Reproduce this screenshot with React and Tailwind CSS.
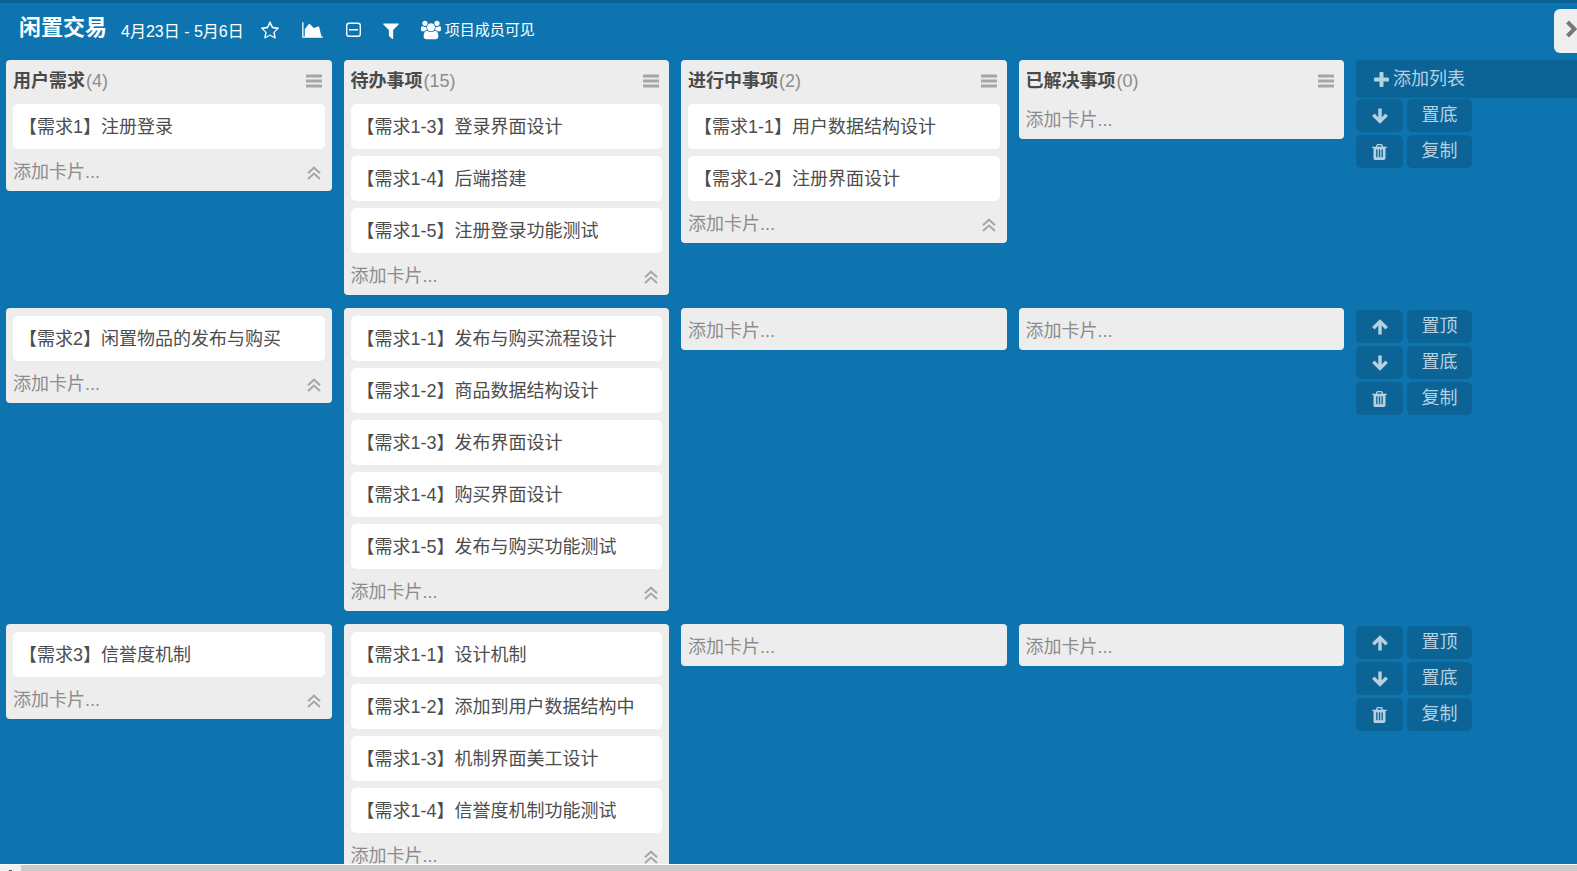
const LATIN_CJK = "font-['Liberation_Sans','Noto_Sans_CJK_SC',sans-serif]";

function Svg({ box, className, children }) {
  return (
    <svg viewBox={box} className={className} fill="currentColor" aria-hidden="true">
      {children}
    </svg>
  );
}

const StarIcon = () => (
  <Svg box="0 0 1664 1600" className="h-[18px] w-[18px]">
    <path d="M1137 1004l306-297-422-62-189-382-189 382-422 62 306 297-73 421 378-199 377 199zM1664 615q0 22-26 48l-363 354 86 500q1 7 1 20 0 50-41 50-19 0-40-12l-449-236-449 236q-22 12-40 12-21 0-31.500-14.500t-10.500-35.500q0-6 2-20l86-500-364-354q-25-27-25-48 0-37 56-46l502-73 225-455q19-41 49-41t49 41l225 455 502 73q56 9 56 46z" />
  </Svg>
);
const AreaChartIcon = () => (
  <Svg box="0 0 2048 1792" className="h-[18px] w-[21px]">
    <path d="M2048 1536v128h-2048v-1536h128v1408h1920zM1664 512l256 1024h-1664v-704l448-576 448 448z" />
  </Svg>
);
const CollapseIcon = () => (
  <Svg box="0 0 15 16" className="h-4 w-[15px]">
    <path fillRule="evenodd" d="M3 .500h9a3 3 0 0 1 3 3v8.500a3 3 0 0 1-3 3H3a3 3 0 0 1-3-3V3.500a3 3 0 0 1 3-3zm0 1.400A1.600 1.600 0 0 0 1.400 3.500v8.500A1.600 1.600 0 0 0 3 13.600h9a1.600 1.600 0 0 0 1.600-1.600V3.500A1.600 1.600 0 0 0 12 1.900zM3 7h9v1.500H3z" />
  </Svg>
);
const FilterIcon = () => (
  <Svg box="0 0 1408 1536" className="h-[17px] w-4">
    <path d="M1403 167q17 41-14 70l-493 493v742q0 42-39 59-13 5-25 5-27 0-45-19l-256-256q-19-19-19-45v-486l-493-493q-31-29-14-70 17-39 59-39h1280q42 0 59 39z" />
  </Svg>
);
const UsersIcon = () => (
  <Svg box="0 0 1920 1792" className="h-5 w-5">
    <path d="M593 896q-162 5-265 128h-134q-82 0-138-40.500t-56-118.500q0-353 124-353 6 0 43.500 21t97.500 42.500 119 21.500q67 0 133-23-5 37-5 66 0 139 81 256zM1664 1533q0 120-73 189.500t-194 69.500h-874q-121 0-194-69.500t-73-189.500q0-53 3.500-103.500t14-109 26.500-108.500 43-97.500 62-81 85.500-53.500 111.500-20q10 0 43 21.500t73 48 107 48 135 21.500 135-21.500 107-48 73-48 43-21.500q61 0 111.500 20t85.500 53.500 62 81 43 97.500 26.500 108.500 14 109 3.500 103.500zM640 256q0 106-75 181t-181 75-181-75-75-181 75-181 181-75 181 75 75 181zM1344 640q0 159-112.500 271.500t-271.500 112.500-271.500-112.500-112.500-271.500 112.500-271.500 271.500-112.500 271.500 112.500 112.500 271.500zM1920 865q0 78-56 118.500t-138 40.500h-134q-103-123-265-128 81-117 81-256 0-29-5-66 66 23 133 23 59 0 119-21.500t97.500-42.500 43.500-21q124 0 124 353zM1792 256q0 106-75 181t-181 75-181-75-75-181 75-181 181-75 181 75 75 181z" />
  </Svg>
);
const MenuIcon = () => (
  <Svg box="0 0 16 14" className="h-[14px] w-4">
    <path d="M0 .5h16v3H0zM0 5.500h16v3H0zM0 10.500h16v3H0z" />
  </Svg>
);
const DoubleUpIcon = () => (
  <svg viewBox="0 0 14 14" className="h-[14px] w-[14px]" fill="none" stroke="currentColor" strokeWidth="2" aria-hidden="true">
    <path d="M1 7.200l6-5.500 6 5.500M1 13l6-5.500 6 5.500" />
  </svg>
);
const PlusIcon = () => (
  <Svg box="0 0 15 15" className="h-[15px] w-[15px]">
    <rect x="0" y="5.500" width="15" height="4" rx="1" />
    <rect x="5.500" y="0" width="4" height="15" rx="1" />
  </Svg>
);
const ArrowIcon = ({ up }) => (
  <svg viewBox="0 0 16 16" className={up ? "h-4 w-4" : "h-4 w-4 rotate-180"} fill="none" stroke="currentColor" strokeWidth="3.400" aria-hidden="true">
    <path d="M8 15.500V3M1.300 9.300L8 2.600l6.700 6.700" />
  </svg>
);
const TrashIcon = () => (
  <Svg box="0 0 1408 1536" className="h-4 w-[15px]">
    <path d="M512 1248v-704q0-14-9-23t-23-9h-64q-14 0-23 9t-9 23v704q0 14 9 23t23 9h64q14 0 23-9t9-23zm256 0v-704q0-14-9-23t-23-9h-64q-14 0-23 9t-9 23v704q0 14 9 23t23 9h64q14 0 23-9t9-23zm256 0v-704q0-14-9-23t-23-9h-64q-14 0-23 9t-9 23v704q0 14 9 23t23 9h64q14 0 23-9t9-23zm-544-992h448l-48-117q-7-9-17-11h-317q-10 2-17 11zm928 32v64q0 14-9 23t-23 9h-96v948q0 83-47 143.500t-113 60.500h-832q-66 0-113-58.500t-47-141.500v-952h-96q-14 0-23-9t-9-23v-64q0-14 9-23t23-9h309l70-167q15-37 54-63t79-26h320q40 0 79 26t54 63l70 167h309q14 0 23 9t9 23z" />
  </Svg>
);
const ChevronIcon = () => (
  <svg viewBox="0 0 12 18" className="h-[18px] w-3 shrink-0" fill="none" stroke="currentColor" strokeWidth="4" aria-hidden="true">
    <path d="M2.500 2l7 7-7 7" />
  </svg>
);

const columns = [
  { name: "用户需求", count: 4 },
  { name: "待办事项", count: 15 },
  { name: "进行中事项", count: 2 },
  { name: "已解决事项", count: 0 },
];

const rows = [
  [
    ["【需求1】注册登录"],
    ["【需求1-3】登录界面设计", "【需求1-4】后端搭建", "【需求1-5】注册登录功能测试"],
    ["【需求1-1】用户数据结构设计", "【需求1-2】注册界面设计"],
    [],
  ],
  [
    ["【需求2】闲置物品的发布与购买"],
    [
      "【需求1-1】发布与购买流程设计",
      "【需求1-2】商品数据结构设计",
      "【需求1-3】发布界面设计",
      "【需求1-4】购买界面设计",
      "【需求1-5】发布与购买功能测试",
    ],
    [],
    [],
  ],
  [
    ["【需求3】信誉度机制"],
    [
      "【需求1-1】设计机制",
      "【需求1-2】添加到用户数据结构中",
      "【需求1-3】机制界面美工设计",
      "【需求1-4】信誉度机制功能测试",
    ],
    [],
    [],
  ],
];

function List({ column, cards }) {
  const topPadding = column ? "" : cards.length > 0 ? "pt-2" : "pt-[7px]";
  return (
    <section className={`rounded-[4px] bg-[#ededed] px-[7px] ${topPadding}`}>
      {column && (
        <header className="flex h-11 items-center justify-between pr-[3px] pb-[2px]">
          <h2 className="flex items-baseline gap-px text-[18px] leading-6 font-bold text-[#4a4a4a]">
            {column.name}
            <span className="font-normal text-[#8c8c8c]">({column.count})</span>
          </h2>
          <button type="button" aria-label="列表菜单" className="text-[#a6a6a6]">
            <MenuIcon />
          </button>
        </header>
      )}
      <ul>
        {cards.map((card) => (
          <li key={card} className="mb-[7px] flex h-[45px] items-center rounded-[5px] bg-white px-[6px] pt-[2px] text-[18px] text-[#4d4d4d]">
            {card}
          </li>
        ))}
      </ul>
      <footer className="flex h-[35px] items-center justify-between pr-1 pb-[4px]">
        <button type="button" className="text-[18px] leading-6 text-[#8c8c8c]">添加卡片...</button>
        {cards.length > 0 && (
          <button type="button" aria-label="收起" className="pt-[3px] text-[#a6a6a6]">
            <DoubleUpIcon />
          </button>
        )}
      </footer>
    </section>
  );
}

const sideButton = "flex h-[33px] items-center justify-center rounded-[5px] bg-[#0c6496] text-[18px] text-[#b6d1e1]";

function RowActions({ first }) {
  return (
    <div className={first ? "" : "pt-[2px]"}>
      {first && (
        <button type="button" className="mb-px flex h-[38px] w-full items-center gap-1 rounded-l-[4px] bg-[#0c6496] pl-[18px] text-[18px] text-[#b6d1e1]">
          <PlusIcon />
          添加列表
        </button>
      )}
      <div className="grid grid-cols-[47px_65px] gap-x-1 gap-y-[3px]">
        {!first && (
          <>
            <button type="button" aria-label="上移" className={sideButton}><ArrowIcon up /></button>
            <button type="button" className={sideButton}>置顶</button>
          </>
        )}
        <button type="button" aria-label="下移" className={sideButton}><ArrowIcon /></button>
        <button type="button" className={sideButton}>置底</button>
        <button type="button" aria-label="删除" className={sideButton}><TrashIcon /></button>
        <button type="button" className={sideButton}>复制</button>
      </div>
    </div>
  );
}

export default function App() {
  return (
    <div className={`flex h-screen flex-col overflow-hidden bg-[#0e74af] ${LATIN_CJK}`}>
      <div className="h-[3px] shrink-0 bg-[#0b6193]" />
      <header className="flex h-[57px] shrink-0 items-start justify-between pt-[6px] text-white">
        <div className="flex h-[42px] items-center pl-[19px]">
          <h1 className="pb-[5px] text-[22px] leading-8 font-bold">闲置交易</h1>
          <span className="ml-[14px] pt-1 text-[16px] leading-6">4月23日 - 5月6日</span>
          <button type="button" aria-label="收藏" className="ml-[17px]"><StarIcon /></button>
          <button type="button" aria-label="统计" className="ml-[23px]"><AreaChartIcon /></button>
          <button type="button" aria-label="折叠" className="ml-[23px]"><CollapseIcon /></button>
          <button type="button" aria-label="筛选" className="ml-[22px]"><FilterIcon /></button>
          <button type="button" className="ml-[22px] flex items-center gap-1 text-[15px] leading-6">
            <UsersIcon />
            项目成员可见
          </button>
        </div>
        <button type="button" aria-label="展开侧栏" className="flex h-11 w-[23px] items-center justify-end rounded-l-[6px] bg-[#efefef] pb-1 text-[#777]">
          <ChevronIcon />
        </button>
      </header>
      <main className="flex min-h-0 flex-1 flex-col gap-[13px] overflow-hidden pl-[6px]">
        {rows.map((lists, r) => (
          <div key={r} className="grid shrink-0 grid-cols-[repeat(4,minmax(0,1fr))_221px] items-start gap-x-3">
            {lists.map((cards, c) => (
              <List key={c} column={r === 0 ? columns[c] : null} cards={cards} />
            ))}
            <RowActions first={r === 0} />
          </div>
        ))}
      </main>
      <div className="flex h-[7px] shrink-0 border-t border-white bg-[#f0f0f0]">
        <div className="flex w-[21px] items-end justify-center">
          <span className="h-px w-[3px] bg-[#555]" />
        </div>
        <div className="flex-1 bg-[#cacaca]" />
      </div>
    </div>
  );
}
